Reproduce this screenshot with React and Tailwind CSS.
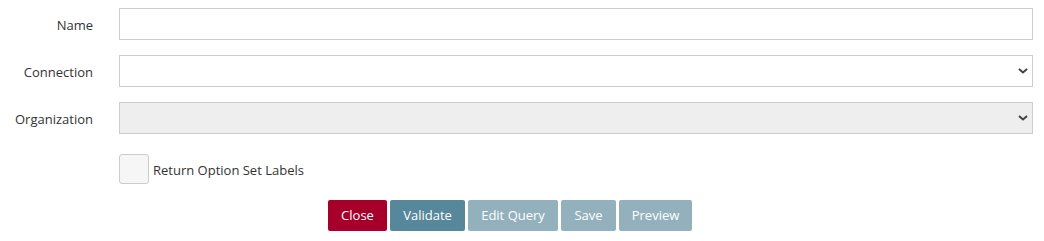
import { useState } from "react";

function Chevron() {
  return (
    <svg width="10" height="6" viewBox="0 0 10 6" className="pointer-events-none absolute right-[5px] top-1/2 -translate-y-1/2">
      <path d="M1 1l4 3.5L9 1" fill="none" stroke="#444" strokeWidth="2" />
    </svg>
  );
}

export default function App() {
  const [name, setName] = useState("");
  const [labels, setLabels] = useState(false);

  return (
    <div className="w-[1044px] h-[241px] bg-white text-[13px] text-[#333] font-['Open_Sans',sans-serif] pt-2 pr-[11px]">
      <div className="grid grid-cols-[93px_1fr] gap-x-[26px] gap-y-[15px] items-center">
        <label className="text-right pt-[3px]">Name</label>
        <input
          value={name}
          onChange={e => setName(e.target.value)}
          className="h-8 border border-[#ccc] bg-white px-2 outline-none"
        />

        <label className="text-right pt-[3px]">Connection</label>
        <div className="relative">
          <select className="h-8 w-full appearance-none border border-[#ccc] bg-white px-2 outline-none">
            <option value=""></option>
          </select>
          <Chevron />
        </div>

        <label className="text-right pt-[3px]">Organization</label>
        <div className="relative">
          <select disabled className="h-8 w-full appearance-none border border-[#ccc] bg-[#eee] px-2 outline-none">
            <option value=""></option>
          </select>
          <Chevron />
        </div>
      </div>

      {/* checkbox row */}
      <label className="ml-[119px] mt-5 flex items-center gap-1 cursor-pointer w-fit">
        <span
          onClick={() => setLabels(v => !v)}
          className="w-[30px] h-[30px] rounded-[3px] border border-[#ccc] bg-[#f6f6f6] flex items-center justify-center text-[#333]"
        >
          {labels ? "✓" : ""}
        </span>
        <span className="pt-[3px]">Return Option Set Labels</span>
      </label>

      {/* Buttons */}
      <div className="ml-[328px] mt-4 flex gap-[3px] text-white">
        <button className="h-[31px] w-[59px] pt-px rounded-[2px] bg-[#a6002a]">Close</button>
        <button className="h-[31px] w-[75px] pt-px rounded-[2px] bg-[#56879b]">Validate</button>
        <button disabled className="h-[31px] w-[90px] pt-px rounded-[2px] bg-[#93b1bd]">Edit Query</button>
        <button disabled className="h-[31px] w-[55px] pt-px rounded-[2px] bg-[#93b1bd]">Save</button>
        <button disabled className="h-[31px] w-[73px] pt-px rounded-[2px] bg-[#93b1bd]">Preview</button>
      </div>
    </div>
  );
}
